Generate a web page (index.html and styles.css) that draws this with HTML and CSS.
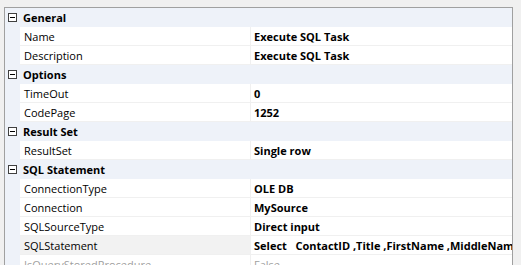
FILE: index.html
```html
<!DOCTYPE html>
<html lang="en">
<head>
    <meta charset="UTF-8">
    <title>Properties</title>
    <link rel="stylesheet" href="styles.css">
</head>
<body>
    <div class="grid">
        <div class="cat"><span class="toggle"></span><b>General</b></div>
        <div class="prop"><span class="gutter"></span><span class="name">Name</span><span class="value">Execute SQL Task</span></div>
        <div class="prop"><span class="gutter"></span><span class="name">Description</span><span class="value">Execute SQL Task</span></div>

        <div class="cat"><span class="toggle"></span><b>Options</b></div>
        <div class="prop"><span class="gutter"></span><span class="name">TimeOut</span><span class="value">0</span></div>
        <div class="prop"><span class="gutter"></span><span class="name">CodePage</span><span class="value">1252</span></div>

        <div class="cat"><span class="toggle"></span><b>Result Set</b></div>
        <div class="prop"><span class="gutter"></span><span class="name">ResultSet</span><span class="value">Single row</span></div>

        <div class="cat"><span class="toggle"></span><b>SQL Statement</b></div>
        <div class="prop"><span class="gutter"></span><span class="name">ConnectionType</span><span class="value">OLE DB</span></div>
        <div class="prop"><span class="gutter"></span><span class="name">Connection</span><span class="value">MySource</span></div>
        <div class="prop"><span class="gutter"></span><span class="name">SQLSourceType</span><span class="value">Direct input</span></div>
        <div class="prop selected"><span class="gutter"></span><span class="name">SQLStatement</span><span class="value">Select &nbsp; ContactID ,Title ,FirstName ,MiddleName ,LastName</span></div>
        <div class="prop disabled"><span class="gutter"></span><span class="name">IsQueryStoredProcedure</span><span class="value">False</span></div>
    </div>
</body>
</html>
```

FILE: styles.css
```css
body {
    margin: 0;
    height: 265px;
    overflow: hidden;
    background: #f0f0f0;
    font-family: "Open Sans", "Noto Sans", sans-serif;
    font-size: 11px;
    color: #000000;
}

.grid {
    margin: 7px 0 0 4px;
    width: 507px;
    border: 1px solid #a0a0a0;
    border-bottom: none;
    background: #ffffff;
}

.cat, .prop {
    display: flex;
    align-items: center;
    height: 19px;
    white-space: nowrap;
    overflow: hidden;
}

.cat {
    background: #eef2f9;
}

.cat b {
    padding-left: 6px;
}

.toggle {
    position: relative;
    box-sizing: border-box;
    width: 9px;
    height: 9px;
    margin-left: 3px;
    border: 1px solid #404040;
    background: #ffffff;
}

.toggle::after {
    content: "";
    position: absolute;
    left: 1px;
    top: 3px;
    width: 5px;
    height: 1px;
    background: #000000;
}

.gutter {
    align-self: stretch;
    width: 15px;
    flex-shrink: 0;
    background: #eef2f9;
}

.name {
    box-sizing: border-box;
    align-self: stretch;
    display: flex;
    align-items: center;
    width: 231px;
    flex-shrink: 0;
    padding-left: 4px;
    border-right: 1px solid #f0f0f0;
    border-bottom: 1px solid #f0f0f0;
}

.value {
    box-sizing: border-box;
    align-self: stretch;
    display: flex;
    align-items: center;
    flex: 1;
    padding-left: 3px;
    font-weight: bold;
    border-bottom: 1px solid #f0f0f0;
    overflow: hidden;
}

.selected .name {
    background: #f2f2f2;
}

.disabled .name,
.disabled .value {
    color: #a0a0a0;
    font-weight: normal;
}
```
